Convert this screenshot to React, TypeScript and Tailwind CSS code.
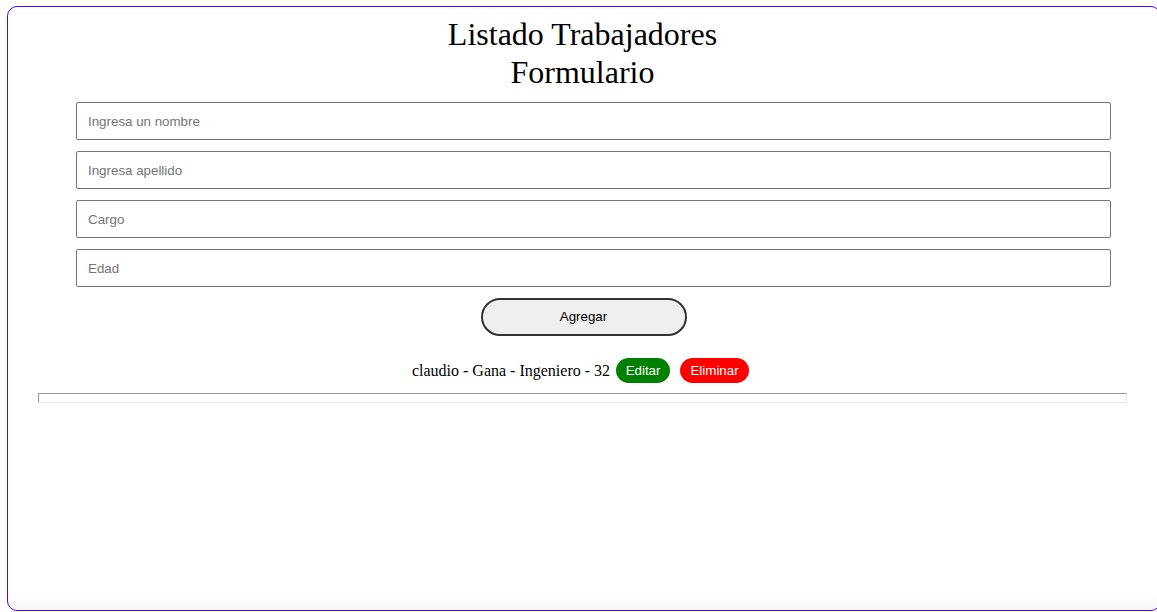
export default function App() {
  const fields = ["Ingresa un nombre", "Ingresa apellido", "Cargo", "Edad"];

  return (
    <div className="w-[1157px] h-[612px] overflow-hidden bg-white">
      <div className="ml-[7px] mt-[6px] w-[1154px] h-[605px] border border-[#5200ff] rounded-[10px] shadow-[inset_0_-14px_14px_-10px_rgba(0,0,0,0.05)] flex flex-col items-center pt-[8px] pr-[3px]">
        {/* Titles */}
        <div className="text-center font-['Liberation_Serif',serif] text-[32px] leading-[38px] text-black">
          <h1>Listado Trabajadores</h1>
          <h2>Formulario</h2>
        </div>

        {/* Form */}
        <form className="mt-[11px] flex flex-col items-center gap-[11px] w-full">
          {fields.map((f) => (
            <input
              key={f}
              placeholder={f}
              className="ml-[22px] w-[1035px] h-[38px] border border-[#767676] rounded-[2px] px-[11px] font-['Liberation_Sans',Arial,sans-serif] text-[13.33px] text-black placeholder:text-[#757575] outline-none"
            />
          ))}
          <button
            type="button"
            className="ml-[2px] w-[206px] h-[38px] rounded-full border-2 border-[#333] bg-[#efefef] font-['Liberation_Sans',Arial,sans-serif] text-[13.33px] text-black"
          >
            Agregar
          </button>
        </form>

        {/* List */}
        <div className="mt-[22px] mr-[4px] flex items-center font-['Liberation_Serif',serif] text-[16px] text-black">
          <span>claudio - Gana - Ingeniero - 32</span>
          <button className="ml-[6px] w-[54px] h-[25px] rounded-full bg-[#008000] text-white font-['Liberation_Sans',Arial,sans-serif] text-[13.33px]">
            Editar
          </button>
          <button className="ml-[10px] w-[69px] h-[25px] rounded-full bg-[#ff0000] text-white font-['Liberation_Sans',Arial,sans-serif] text-[13.33px]">
            Eliminar
          </button>
        </div>

        <div className="mt-[10px] w-[1089px] h-[10px] border-t border-l border-[#9a9a9a] border-b border-r border-b-[#e6e6e6] border-r-[#e6e6e6]" />
      </div>
    </div>
  );
}
